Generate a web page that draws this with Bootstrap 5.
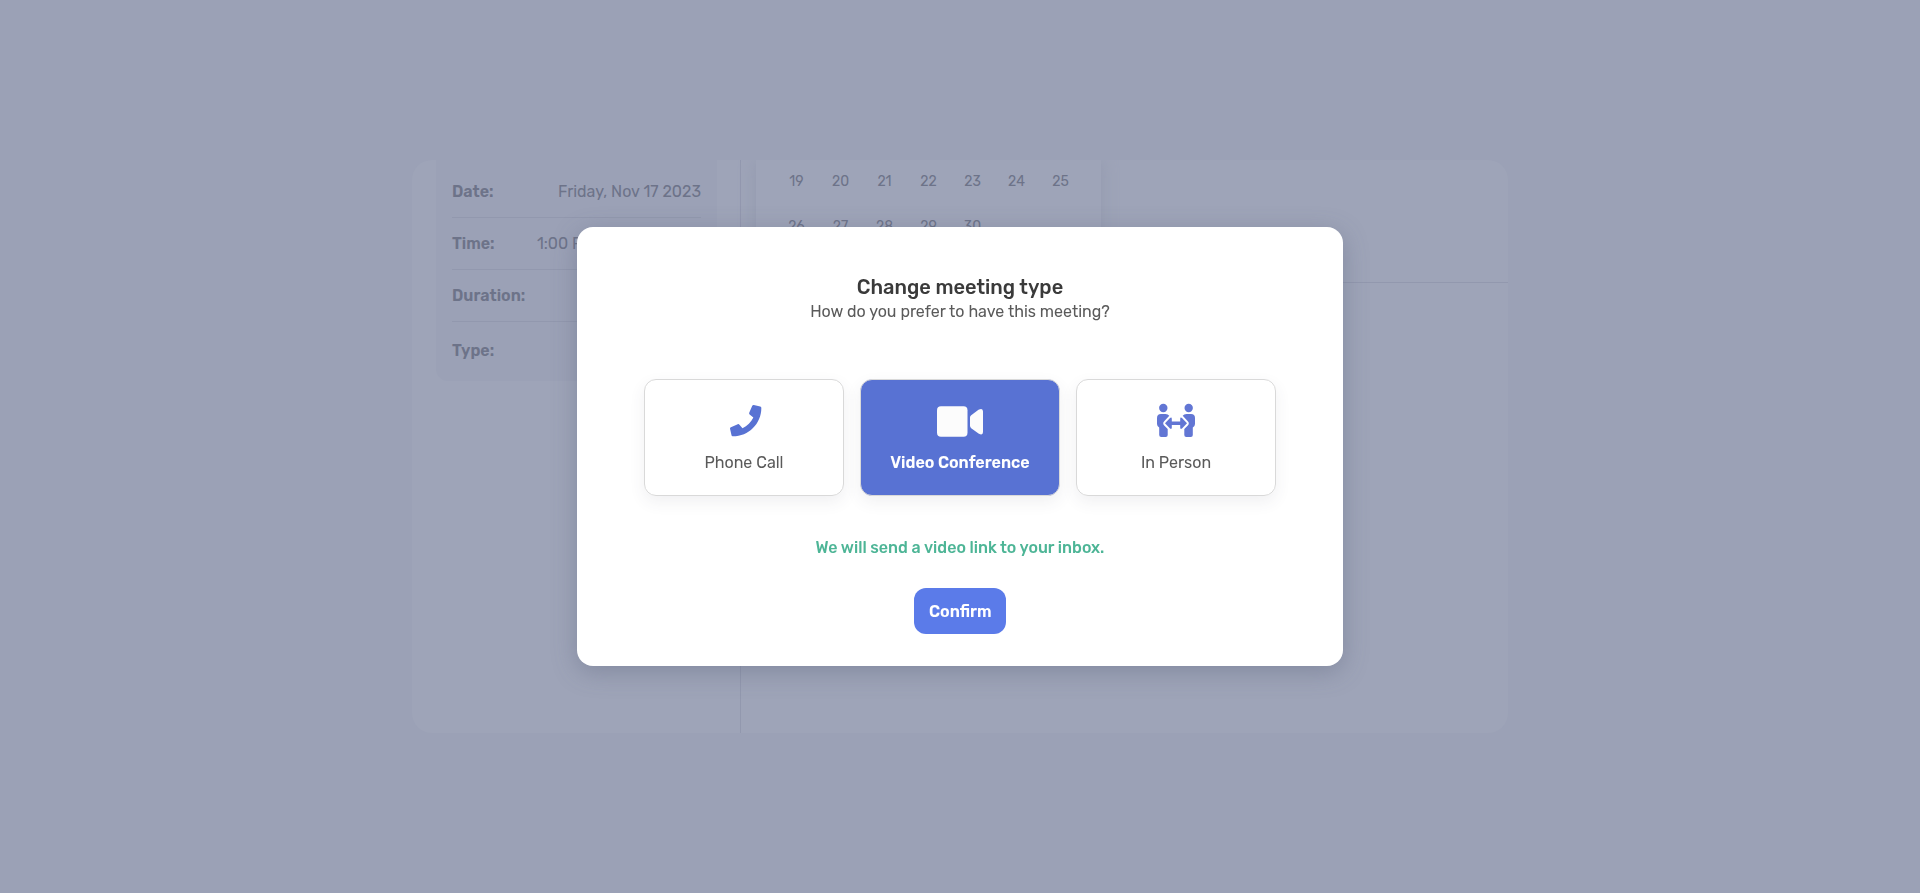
<!DOCTYPE html>
<html lang="en">
<head>
<meta charset="utf-8">
<meta name="viewport" content="width=device-width, initial-scale=1">
<title>Change meeting type</title>
<link href="https://cdn.jsdelivr.net/npm/bootstrap@5.3.0/dist/css/bootstrap.min.css" rel="stylesheet">
<style>
body { font-family: Rubik, Roboto, "Liberation Sans", sans-serif; font-size: 16px; line-height: 24px; color: #5a5a5a; background: #9ba1b6; }
.scheduler { max-width: 1096px; height: calc(64vh + 1px); border-radius: 20px; background: #9ea4b8; color: #6d7389; overflow: hidden; }
.summary-col { flex: 0 0 329px; padding: 0 23px 0 24px; border-right: 1px solid #9298ae; }
.summary-box { background: #9ba1b6; padding: 6px 16px 1px; border-radius: 0 0 12px 12px; }
.summary-row { padding: 14px 0 13px; border-bottom: 1px solid #9298ae; }
.summary-row.last-row { padding: 17px 0; border: 0; }
.summary-row dt { font-weight: 600; }
.calendar-col { height: 123px; border-bottom: 1px solid #9298ae; }
.month-box { width: 345px; margin-left: 15px; padding: 0 18px; background: #9ea4b8; box-shadow: 0 0 16px #9399ae; }
.month-table { width: 308px; table-layout: fixed; font-size: 14px; }
.month-table td { height: 45px; padding: 0; text-align: center; }
.month-table tr:first-child td { height: 44px; }
.meeting-modal .modal-dialog { max-width: 766px; }
.meeting-modal .modal-content { border: 0; border-radius: 16px; padding: 48px 32px 32px; color: #5a5a5a; box-shadow: 0 6px 24px rgba(80, 90, 115, .35); }
.modal-heading { font-size: 20px; line-height: 25px; font-weight: 500; color: #3a3a3a; }
.options { gap: 16px; margin-top: 55px; }
.option { width: 200px; padding: 23px 8px 20px; border: 1px solid #d9d9d9; border-radius: 12px; box-shadow: 0 6px 16px rgba(60, 60, 90, .08); gap: 13px; cursor: pointer; }
.option svg { height: 35px; color: #5872d3; }
.btn-check:checked + .option { background: #5872d3; color: #fff; font-weight: 600; }
.btn-check:checked + .option svg { color: #fcfcfc; }
.hint { margin-top: 40px; color: #4db596; font-weight: 500; }
.confirm { margin-top: 28px; padding: 12px 15px 10px; width: 92px; line-height: 24px; border: 0; border-radius: 12px; background: #5b7be9; color: #fff; font-weight: 600; font-size: 16px; }
</style>
</head>
<body>
<main class="d-flex align-items-center justify-content-center min-vh-100">
  <div class="scheduler d-flex w-100">
    <aside class="summary-col">
      <dl class="summary-box mb-0">
        <div class="summary-row d-flex justify-content-between"><dt>Date:</dt><dd class="mb-0">Friday, Nov 17 2023</dd></div>
        <div class="summary-row d-flex justify-content-between"><dt>Time:</dt><dd class="mb-0">1:00 PM - 1:30 PM EST</dd></div>
        <div class="summary-row d-flex justify-content-between"><dt>Duration:</dt><dd class="mb-0">30 min</dd></div>
        <div class="summary-row last-row d-flex justify-content-between"><dt>Type:</dt><dd class="mb-0">Video</dd></div>
      </dl>
    </aside>
    <section class="calendar-col flex-grow-1">
      <div class="month-box">
        <table class="month-table mx-auto">
          <tbody>
            <tr><td>19</td><td>20</td><td>21</td><td>22</td><td>23</td><td>24</td><td>25</td></tr>
            <tr><td>26</td><td>27</td><td>28</td><td>29</td><td>30</td><td></td><td></td></tr>
          </tbody>
        </table>
      </div>
    </section>
  </div>
</main>

<div class="modal d-block meeting-modal" role="dialog" aria-labelledby="modalHeading">
  <div class="modal-dialog modal-dialog-centered">
    <form class="modal-content text-center align-items-center">
      <h1 class="modal-heading mb-0" id="modalHeading">Change meeting type</h1>
      <p class="mb-0">How do you prefer to have this meeting?</p>
      <div class="options d-flex flex-wrap justify-content-center">
        <input class="btn-check" type="radio" name="type" id="phone">
        <label class="option d-flex flex-column align-items-center" for="phone">
          <svg viewBox="0 0 35 35" width="35" fill="currentColor" aria-hidden="true"><path transform="translate(3 2) scale(.0612)" d="M493.4 24.6l-104-24c-11.3-2.6-22.9 3.3-27.5 13.9l-48 112c-4.2 9.8-1.4 21.3 6.9 28l60.6 49.6c-36 76.7-98.9 140.5-177.2 177.2l-49.6-60.6c-6.8-8.3-18.2-11.1-28-6.9l-112 48C3.9 366.5-2 378.1.6 389.4l24 104C27.1 504.2 36.7 512 48 512c256.1 0 464-207.5 464-464 0-11.2-7.7-20.9-18.6-23.4z"/></svg>
          <span>Phone Call</span>
        </label>
        <input class="btn-check" type="radio" name="type" id="video" checked>
        <label class="option d-flex flex-column align-items-center" for="video">
          <svg viewBox="0 0 46 35" width="46" fill="currentColor" aria-hidden="true"><rect y="3.300" width="30.500" height="30.500" rx="4"/><path d="M33 14.500q0-1.500 1.200-2.300L41.500 6.800Q46 4.500 46 8.500V29Q46 33 41.500 30.500L34.200 25.200Q33 24.300 33 22.800Z"/></svg>
          <span>Video Conference</span>
        </label>
        <input class="btn-check" type="radio" name="type" id="person">
        <label class="option d-flex flex-column align-items-center" for="person">
          <svg viewBox="0 0 38 35" width="38" fill="#6276d4" aria-hidden="true">
            <circle cx="6.300" cy="5" r="4.200"/><circle cx="31.700" cy="5" r="4.200"/>
            <path id="torso" d="M4 11H8.500Q11 11 12.300 12.800L7.200 18.200Q5.200 20.300 7.200 22.400L10.700 26V32Q10.700 34 8.700 34H4.200Q2.200 34 2.200 32V24.500Q0 23.200 0 21V15Q0 11 4 11Z"/>
            <use href="#torso" transform="matrix(-1 0 0 1 38 0)"/>
            <path d="M8 20.300L13 15Q14.800 13.800 14.800 16V18.500H23.200V16Q23.200 13.800 25 15L30 20.300L25 25.600Q23.200 26.800 23.200 24.600V22.100H14.800V24.600Q14.800 26.800 13 25.600Z"/>
          </svg>
          <span>In Person</span>
        </label>
      </div>
      <p class="hint mb-0">We will send a video link to your inbox.</p>
      <button class="confirm btn" type="button">Confirm</button>
    </form>
  </div>
</div>
<script src="https://cdn.jsdelivr.net/npm/bootstrap@5.3.0/dist/js/bootstrap.bundle.min.js"></script>
</body>
</html>
